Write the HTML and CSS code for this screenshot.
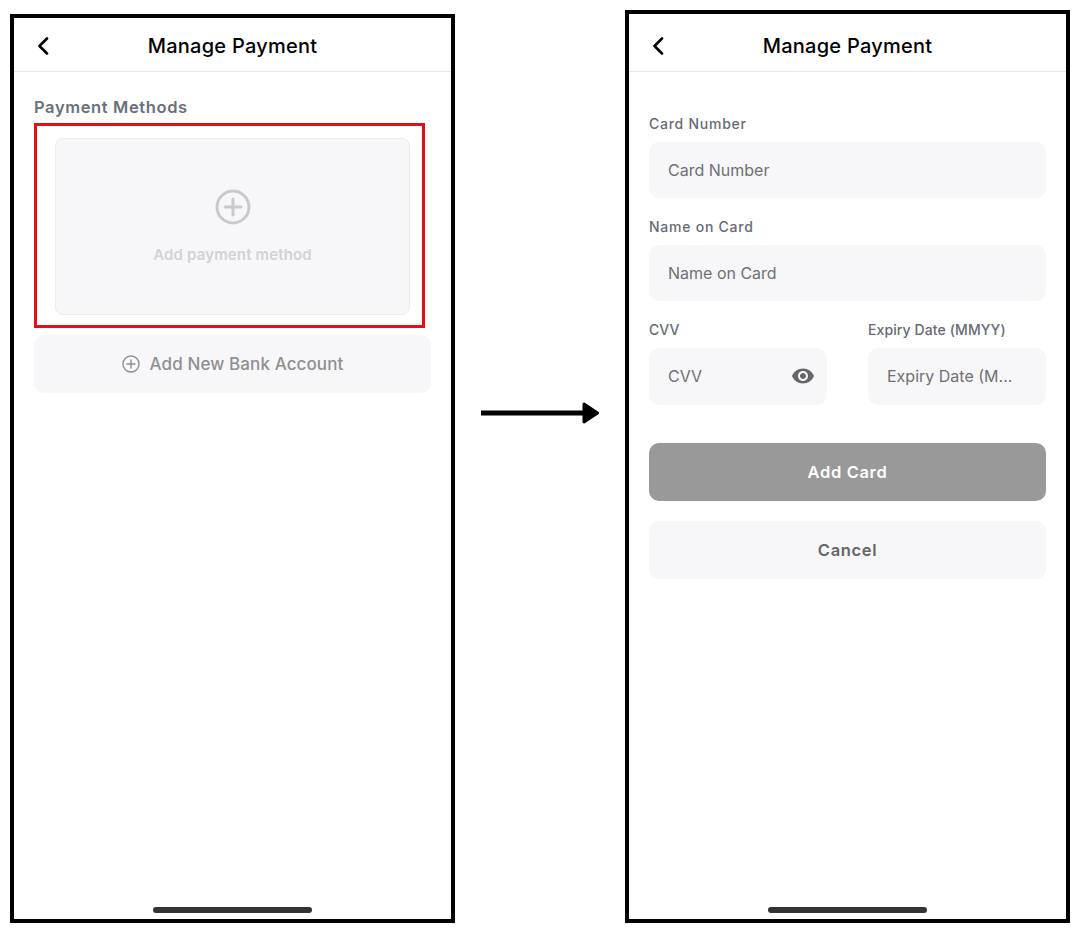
FILE: index.html
```html
<!DOCTYPE html>
<html lang="en">
<head>
<meta charset="utf-8">
<title>Manage Payment</title>
<link rel="stylesheet" href="styles.css">
</head>
<body>
<main class="stage">
  <section class="phone phone-left">
    <header class="topbar">
      <svg class="back" viewBox="0 0 12 18" width="12" height="18"><path d="M10 1.5 2.5 9l7.5 7.5"/></svg>
      <h1 class="title">Manage Payment</h1>
    </header>
    <div class="content">
      <h2 class="section-title">Payment Methods</h2>
      <div class="highlight">
        <div class="add-card">
          <svg class="plus-large" viewBox="0 0 36 36" width="36" height="36"><circle cx="18" cy="18" r="16"/><path d="M18 10v16M10 18h16"/></svg>
          <span class="add-card-text">Add payment method</span>
        </div>
      </div>
      <div class="bank-btn">
        <svg class="plus-small" viewBox="0 0 18 18" width="18" height="18"><circle cx="9" cy="9" r="8"/><path d="M9 5v8M5 9h8"/></svg>
        <span>Add New Bank Account</span>
      </div>
    </div>
    <div class="home-indicator"></div>
  </section>

  <div class="arrow">
    <svg viewBox="0 0 118 22" width="118" height="22"><path class="arrow-shaft" d="M0 11h106"/><path class="arrow-head" d="M103 2l13.500 9-13.500 9z"/></svg>
  </div>

  <section class="phone phone-right">
    <header class="topbar">
      <svg class="back" viewBox="0 0 12 18" width="12" height="18"><path d="M10 1.5 2.5 9l7.5 7.5"/></svg>
      <h1 class="title">Manage Payment</h1>
    </header>
    <form class="content form">
      <div class="field">
        <label class="label label-wide">Card Number</label>
        <div class="input">Card Number</div>
      </div>
      <div class="field">
        <label class="label label-wide">Name on Card</label>
        <div class="input">Name on Card</div>
      </div>
      <div class="field-row">
        <div class="field">
          <label class="label">CVV</label>
          <div class="input">CVV
            <svg class="eye" viewBox="0 0 24 24" width="24" height="24"><path d="M12 4.500C7 4.500 2.730 7.610 1 12c1.730 4.390 6 7.500 11 7.500s9.270-3.110 11-7.500c-1.730-4.390-6-7.500-11-7.500zM12 17c-2.760 0-5-2.240-5-5s2.240-5 5-5 5 2.240 5 5-2.240 5-5 5zm0-8c-1.660 0-3 1.340-3 3s1.340 3 3 3 3-1.340 3-3-1.340-3-3-3z"/></svg>
          </div>
        </div>
        <div class="field">
          <label class="label">Expiry Date (MMYY)</label>
          <div class="input">Expiry Date (M...</div>
        </div>
      </div>
      <div class="btn btn-primary">Add Card</div>
      <div class="btn btn-secondary">Cancel</div>
    </form>
    <div class="home-indicator"></div>
  </section>
</main>
</body>
</html>
```

FILE: styles.css
```css
* { box-sizing: border-box; }
html, body { margin: 0; padding: 0; background: #fff; }
body { font-family: Inter, "Liberation Sans", sans-serif; width: 1088px; height: 936px; overflow: hidden; }

.stage { display: flex; align-items: flex-end; height: 923px; padding-left: 10px; }

.phone {
  display: flex;
  flex-direction: column;
  width: 445px;
  border: 4px solid #000;
  background: #fff;
}
.phone-left { height: 909px; }
.phone-right { height: 913px; margin-left: 26px; }

.arrow { display: flex; width: 118px; height: 22px; margin: 0 0 499px 26px; }
.arrow-shaft { stroke: #000; stroke-width: 5; fill: none; }
.arrow-head { fill: #000; stroke: #000; stroke-width: 3; stroke-linejoin: round; }

.topbar {
  position: relative;
  display: flex;
  align-items: center;
  justify-content: center;
  flex: none;
  border-bottom: 1px solid #e6e6e9;
}
.phone-left .topbar { height: 54px; padding-top: 2px; }
.phone-right .topbar { height: 58px; padding-top: 6px; }
.back { position: absolute; left: 23px; fill: none; stroke: #000; stroke-width: 2.6; stroke-linecap: round; stroke-linejoin: round; }
.title { margin: 0; font-size: 20px; font-weight: 500; color: #000; letter-spacing: 0.25px; line-height: 24px; }

.content { display: flex; flex-direction: column; padding: 0 20px; flex: 1; }
.phone-left .content { padding-top: 25px; }

.section-title { margin: 0 0 6px; font-size: 16.500px; line-height: 20px; font-weight: 600; color: #6b6f7b; letter-spacing: 0.62px; }

.highlight {
  width: 391px;
  height: 205px;
  border: 3px solid #e01019;
  padding: 12px 12px 10px 18px;
}
.add-card {
  display: flex;
  flex-direction: column;
  align-items: center;
  width: 355px;
  height: 177px;
  background: #f7f7f9;
  border: 1px solid #ebebee;
  border-radius: 8px;
  padding-top: 50px;
}
.plus-large { fill: none; stroke: #c9c9cb; stroke-width: 3; stroke-linecap: round; }
.add-card-text { margin-top: 20px; font-size: 15px; line-height: 20px; font-weight: 600; color: #d2d2d5; letter-spacing: 0.15px; }

.bank-btn {
  display: flex;
  align-items: center;
  justify-content: center;
  gap: 10px;
  width: 397px;
  height: 58px;
  margin-top: 7px;
  background: #f7f7f9;
  border-radius: 10px;
  font-size: 17px;
  font-weight: 500;
  color: #8e8e93;
  letter-spacing: 0.1px;
}
.plus-small { fill: none; stroke: #8e8e93; stroke-width: 1.4; stroke-linecap: round; flex: none; }

.form { padding-top: 42px; }
.field { display: flex; flex-direction: column; margin-bottom: 19px; min-width: 0; }
.label { font-size: 14px; line-height: 20px; font-weight: 500; color: #666a75; margin-bottom: 8px; letter-spacing: 0.1px; }
.label-wide { letter-spacing: 0.75px; }
.input {
  display: flex;
  align-items: center;
  justify-content: space-between;
  height: 56px;
  padding: 0 12px 0 19px;
  background: #f7f7f9;
  border-radius: 10px;
  font-size: 16px;
  color: #6f6f74;
  white-space: nowrap;
}
.field-row { display: grid; grid-template-columns: 178px 178px; column-gap: 41px; }
.field-row .field { margin-bottom: 0; }
.field-row .input { height: 57px; padding-bottom: 1px; }
.eye { fill: #65656a; flex: none; }

.btn {
  display: flex;
  align-items: center;
  justify-content: center;
  height: 58px;
  border-radius: 10px;
  font-size: 16.500px;
  font-weight: 600;
  letter-spacing: 0.65px;
}
.btn-primary { margin-top: 38px; background: #999; color: #fff; }
.btn-secondary { margin-top: 20px; background: #f7f7f9; color: #65656a; }

.home-indicator {
  flex: none;
  align-self: center;
  width: 159px;
  height: 6px;
  margin-bottom: 6px;
  background: #333;
  border-radius: 3px;
}
```
